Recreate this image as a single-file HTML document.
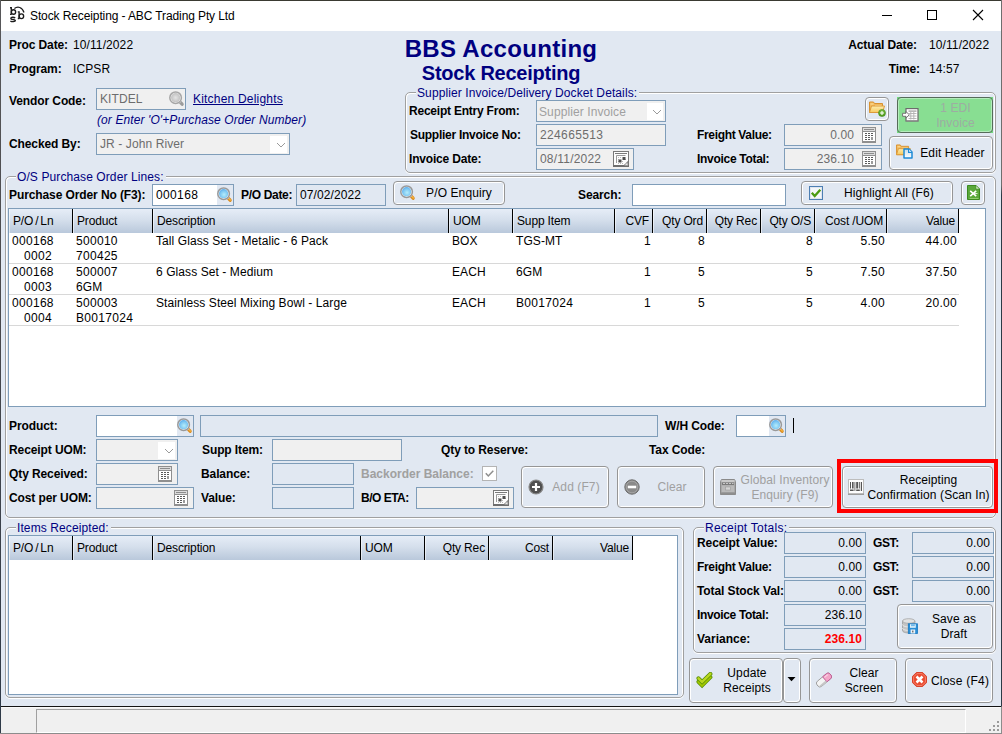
<!DOCTYPE html>
<html>
<head>
<meta charset="utf-8">
<title>Stock Receipting</title>
<style>
*{box-sizing:border-box;margin:0;padding:0}
html,body{width:1002px;height:734px;overflow:hidden;background:#e1e8f2}
body{font-family:"Liberation Sans",sans-serif;font-size:12px;color:#000;position:relative;letter-spacing:0.1px}
.a{position:absolute}
.lb{position:absolute;font-weight:bold;letter-spacing:-0.1px;height:16px;line-height:16px;white-space:nowrap}
.tx{position:absolute;height:16px;line-height:16px;white-space:nowrap}
.nv{color:#000080}
.in{position:absolute;border:1px solid #7f9db9;background:#e1e8f2;height:22px;line-height:20px;padding:0 3px;white-space:nowrap;overflow:hidden}
.in.w{background:#fff}
.in.d{background:#f0f0f0;color:#6d6d6d}
.in.r{text-align:right;padding-right:3px}
.grp{position:absolute;border:1px solid #a0a0a0;border-radius:5px;box-shadow:inset 1px 1px 0 #fff, inset -1px 0 0 #fff, 0 1px 0 #fff}
.lg{position:absolute;top:-8px;height:16px;line-height:16px;background:#e1e8f2;color:#000080;padding:0 2px 0 1px;white-space:nowrap}
.btn{position:absolute;border:1px solid #969696;border-radius:4px;background:#e1e8f2;box-shadow:inset 1px 1px 0 #fff, inset -1px -1px 0 #fff;text-align:center;white-space:nowrap}
.btn.dis{color:#a0a0a0}
.grid{position:absolute;border:1px solid #7f9db9;background:#fff;overflow:hidden}
.hd{position:absolute;top:0;height:24px;line-height:24px;letter-spacing:-0.150px;background:linear-gradient(#e6edf7,#d5dfec 45%,#b9c8db);border-right:1px solid #000;border-left:1px solid rgba(255,255,255,.55);padding:0 3px;white-space:nowrap;overflow:hidden}
.hd.r{text-align:right}
.c{position:absolute;height:15px;line-height:15px;white-space:nowrap;letter-spacing:.3px}
.c.t{letter-spacing:.08px}
.c.r{text-align:right}
.ic{position:absolute}
.rl{position:absolute;left:0;height:1px;background:#d8d8d8}
</style>
</head>
<body>
<svg width="0" height="0" style="position:absolute">
<defs>
  <radialGradient id="lens" cx="0.55" cy="0.6" r="0.7"><stop offset="0" stop-color="#b4ecfa"/><stop offset="0.6" stop-color="#7cc6f2"/><stop offset="1" stop-color="#4a9ee6"/></radialGradient>
  <radialGradient id="lensg" cx="0.5" cy="0.5" r="0.7"><stop offset="0" stop-color="#e4e4e4"/><stop offset="1" stop-color="#b4b4b4"/></radialGradient>
  <linearGradient id="fold" x1="0" y1="0" x2="0" y2="1"><stop offset="0" stop-color="#fdeeb0"/><stop offset="1" stop-color="#f7c95e"/></linearGradient>
  <linearGradient id="grn" x1="0" y1="0" x2="0" y2="1"><stop offset="0" stop-color="#7cc043"/><stop offset="1" stop-color="#4f9a1c"/></linearGradient>
  <linearGradient id="docb" x1="0" y1="0" x2="0" y2="1"><stop offset="0" stop-color="#c2dcec"/><stop offset="1" stop-color="#ffffff"/></linearGradient>
  <symbol id="mag" viewBox="0 0 16 20">
    <path d="M10.600 12.600l2.500 2.600" stroke="#d98a1c" stroke-width="3.300" stroke-linecap="round"/>
    <path d="M12 13.600l1.300 1.300" stroke="#f6b23e" stroke-width="1.400" stroke-linecap="round"/>
    <path d="M10.300 12.400l1.200 1.200" stroke="#c4c8cf" stroke-width="2.600"/>
    <circle cx="6.600" cy="8.700" r="5.800" fill="#f8f8f8" stroke="#999" stroke-width="1.500"/>
    <circle cx="6.600" cy="8.700" r="4.600" fill="url(#lens)"/>
  </symbol>
  <symbol id="magg" viewBox="0 0 16 20">
    <path d="M10.600 12.600l2.500 2.600" stroke="#9c9c9c" stroke-width="3.300" stroke-linecap="round"/>
    <path d="M10.300 12.400l1.200 1.200" stroke="#c8c8c8" stroke-width="2.600"/>
    <circle cx="6.600" cy="8.700" r="5.800" fill="#f6f6f6" stroke="#a6a6a6" stroke-width="1.500"/>
    <circle cx="6.600" cy="8.700" r="4.600" fill="url(#lensg)"/>
  </symbol>
  <symbol id="cal" viewBox="0 0 16 16">
    <rect x="0.500" y="0.500" width="15" height="15" fill="#fdfdfd" stroke="#787878"/>
    <rect x="0" y="14" width="16" height="2" fill="#6e6e6e"/>
    <path d="M2 2.500h12" stroke="#7a7a7a"/>
    <path d="M3.500 12v-7.500h9" stroke="#9a9a9a" fill="none"/>
    <g fill="#b8b8b8"><rect x="5" y="6" width="1" height="1"/><rect x="7" y="6" width="1" height="1"/><rect x="5" y="8" width="1" height="1"/><rect x="12" y="8" width="1" height="1"/><rect x="5" y="10" width="1" height="1"/><rect x="9" y="10" width="1" height="1"/><rect x="5" y="12" width="1" height="1"/><rect x="7" y="12" width="1" height="1"/><rect x="9" y="12" width="1" height="1"/></g>
    <rect x="9.500" y="6" width="3" height="3" fill="#4e4e4e"/>
    <rect x="5.500" y="8.500" width="3" height="3" fill="#4e4e4e"/>
    <path d="M15 10.500l-4.500 4.500h4.500z" fill="#9a9a9a"/>
    <path d="M15.500 10l-5 5" stroke="#6e6e6e" fill="none"/>
    <rect x="12.500" y="12.500" width="2" height="1.500" fill="#e8e8e8"/>
  </symbol>
  <symbol id="calc" viewBox="0 0 14 16">
    <rect width="14" height="16" fill="#8f8f8f"/>
    <rect x="1" y="1" width="12" height="3" fill="#dcdcdc"/>
    <rect x="2" y="2" width="10" height="1" fill="#8c8c8c"/>
    <rect x="1" y="5" width="12" height="9" fill="#fff"/>
    <g fill="#5a5a5a"><rect x="3" y="6" width="2" height="1"/><rect x="6" y="6" width="2" height="1"/><rect x="9" y="6" width="2" height="1"/>
    <rect x="3" y="8" width="2" height="1"/><rect x="6" y="8" width="2" height="1"/><rect x="9" y="8" width="2" height="1"/>
    <rect x="3" y="10" width="2" height="1"/><rect x="6" y="10" width="2" height="1"/>
    <rect x="3" y="12" width="2" height="1"/><rect x="6" y="12" width="2" height="1"/></g>
    <rect x="9" y="10" width="2" height="3" fill="#9a9a9a"/>
  </symbol>
  <symbol id="chev" viewBox="0 0 10 6"><path d="M1 1l4 4 4-4" fill="none" stroke="#9a9a9a" stroke-width="1"/></symbol>
  <symbol id="folder" viewBox="0 0 16 14">
    <path d="M0.500 11.500v-10.500h4l1 1.500h8v9z" fill="#f3b95c" stroke="#d8912f"/>
    <path d="M1.500 3h3M6 4.500h6.500" stroke="#fbe2a0" fill="none"/>
    <path d="M0.500 11.500l2-6.500h13l-2 6.500z" fill="url(#fold)" stroke="#dc9a3a"/>
  </symbol>
  <symbol id="plusc" viewBox="0 0 8 8">
    <circle cx="4" cy="4" r="3.500" fill="url(#grn)" stroke="#3f8a14" stroke-width="0.600"/>
    <path d="M4 2v4M2 4h4" stroke="#fff" stroke-width="1.100"/>
  </symbol>
  <symbol id="edi" viewBox="0 0 17 14">
    <rect x="4" y="0.600" width="12" height="12.400" fill="#fff" stroke="#6c6c6c" stroke-width="1.200"/>
    <rect x="4" y="12.500" width="12.600" height="1" fill="#8a8a8a"/>
    <rect x="6.500" y="2.500" width="8" height="1.200" fill="#9a9a9a"/>
    <path d="M6.500 5.500h8M6.500 8h8M6.500 10.500h8M8.800 4v7.500M11.800 4v7.500" stroke="#b0b0b0" stroke-width="0.900" fill="none"/>
    <path d="M0.600 5.300h3.400v-1.800l3.200 3.300-3.200 3.300v-1.800h-3.400z" fill="#fff" stroke="#6c6c6c" stroke-width="0.900"/>
  </symbol>
  <symbol id="doc" viewBox="0 0 10 11">
    <path d="M1 1h5l3 3v6h-8z" fill="url(#docb)" stroke="#1e8ad6" stroke-width="1.500" stroke-linejoin="round"/>
    <path d="M5.600 1v3.400h3.400" fill="#fff" stroke="#1e8ad6" stroke-width="1.200"/>
  </symbol>
  <symbol id="chk" viewBox="0 0 14 14">
    <rect x="0.500" y="0.500" width="13" height="13" fill="#f4f7fa" stroke="#4d7fb3"/>
    <rect x="1.500" y="1.500" width="11" height="11" fill="none" stroke="#dfe6ee"/>
    <path d="M2.800 6.800l2.900 3.200 5.600-6.200" fill="none" stroke="#4a9b12" stroke-width="2.300"/>
  </symbol>
  <symbol id="xls" viewBox="0 0 13 15">
    <path d="M0.500 0.500h8.500l3.500 3.500v10.500h-12z" fill="#5aa83a" stroke="#3d8a20"/>
    <path d="M9 0.500v3.500h3.500z" fill="#e8f4e0" stroke="#3d8a20" stroke-width="0.600"/>
    <path d="M2.500 13.500h9" stroke="#8fce6c" fill="none"/>
    <path d="M3.200 5.800l6 5.400M9.200 5.800l-6 5.400" stroke="#fff" stroke-width="1.600" fill="none"/>
    <path d="M5 8.500h5.500" stroke="#fff" stroke-width="0.800"/>
  </symbol>
  <symbol id="addc" viewBox="0 0 16 16">
    <circle cx="8" cy="8" r="7" fill="#505050" stroke="#8a8a8a" stroke-width="1.200"/>
    <path d="M8 4v8M4 8h8" stroke="#fff" stroke-width="2.200"/>
  </symbol>
  <symbol id="minc" viewBox="0 0 16 16">
    <circle cx="8" cy="8" r="7.200" fill="#8a8a8a" stroke="#6e6e6e" stroke-width="1"/>
    <circle cx="8" cy="8" r="5.800" fill="none" stroke="#a4a4a4" stroke-width="1"/>
    <path d="M3.800 8h8.400" stroke="#fff" stroke-width="2.600"/>
  </symbol>
  <symbol id="glob" viewBox="0 0 16 16">
    <path d="M1.500 0.500h13l1 2v13h-15v-13z" fill="#a9a9a9" stroke="#8a8a8a"/>
    <rect x="1.500" y="1" width="13" height="2" fill="#c9c9c9"/>
    <rect x="2" y="3.500" width="12" height="2.500" fill="#7a7a7a"/>
    <path d="M3 4.500h2M6 4.500h2M9 4.500h2M12 4.500h1.500" stroke="#c8c8c8"/>
    <rect x="2" y="6.500" width="12" height="6.500" fill="#b9b9b9"/>
    <rect x="5.500" y="8" width="5" height="3" fill="#d4d4d4" stroke="#9a9a9a" stroke-width="0.600"/>
    <rect x="0.500" y="13.500" width="15" height="2" fill="#8e8e8e"/>
  </symbol>
  <symbol id="barc" viewBox="0 0 16 16">
    <rect x="0.500" y="0.500" width="15" height="14.500" fill="#fdfdfd" stroke="#bdbdbd"/>
    <rect x="0" y="14.500" width="16" height="1.500" fill="#9c9c9c"/>
    <g fill="#555"><rect x="2" y="3" width="1" height="6.500"/><rect x="4" y="3" width="1.600" height="6.500"/><rect x="6.500" y="3" width="0.800" height="9"/><rect x="8.200" y="3" width="2" height="6.500"/><rect x="11" y="3" width="0.800" height="6.500"/><rect x="12.800" y="3" width="1.200" height="9"/>
    <rect x="2" y="10.500" width="3.600" height="1.500"/><rect x="8.200" y="10.500" width="3.600" height="1.500"/></g>
  </symbol>
  <symbol id="db" viewBox="0 0 16 16">
    <path d="M0.500 3v9.500c0 1.500 2.800 2.500 6.200 2.500s6.200-1 6.200-2.500v-9.500z" fill="#c4c4c4" stroke="#9a9a9a" stroke-width="0.800"/>
    <path d="M0.500 6.500c0 1.500 2.800 2.400 6.200 2.400s6.200-0.900 6.200-2.400M0.500 10c0 1.500 2.800 2.400 6.200 2.400s6.200-0.900 6.200-2.400" fill="none" stroke="#ececec" stroke-width="1"/>
    <ellipse cx="6.700" cy="3" rx="6.200" ry="2.300" fill="#e2e2e2" stroke="#a4a4a4" stroke-width="0.800"/>
    <rect x="6.300" y="5.800" width="9.200" height="9.700" fill="#2a8ed6" stroke="#1878c0" stroke-width="0.800"/>
    <rect x="8" y="6.200" width="5.800" height="3.600" fill="#dff0fb"/>
    <rect x="9" y="6.200" width="3.800" height="2" fill="#6fb8ea"/>
    <rect x="8.600" y="11.500" width="4.600" height="4" fill="#e8f2fa"/>
    <rect x="10.200" y="12.600" width="1.200" height="1.800" fill="#555"/>
  </symbol>
  <symbol id="ok2" viewBox="0 0 17 17">
    <g fill="none" stroke-linejoin="miter" stroke-linecap="round">
      <path d="M2.500 9.800l3.600 3.700 8.300-8.300" stroke="#558c05" stroke-width="4"/>
      <path d="M2.500 9.800l3.600 3.700 8.300-8.300" stroke="#a4ca00" stroke-width="2.500"/>
      <path d="M2.500 6.300l3.600 3.700 8.300-8.100" stroke="#558c05" stroke-width="4"/>
      <path d="M2.500 6.300l3.600 3.700 8.300-8.100" stroke="#b9d720" stroke-width="2.500"/>
    </g>
  </symbol>
  <symbol id="eras" viewBox="0 0 16 16">
    <g transform="rotate(-40 8 8)">
      <rect x="-0.500" y="4.700" width="17" height="6.600" rx="2.600" fill="#f4f4f4" stroke="#9c9c9c" stroke-width="0.900"/>
      <path d="M9 4.700h5c1.400 0 2.500 1.200 2.500 2.600v1.400c0 1.400-1.100 2.600-2.500 2.600h-5z" fill="#f3a6c8" stroke="#c05a96" stroke-width="0.900"/>
      <path d="M0.500 9.500h8.500v1.800h-6c-1.300 0-2.200-0.800-2.500-1.800z" fill="#c6c6c6"/>
      <path d="M10 6.300h4.500" stroke="#fbd6e8" stroke-width="1"/>
    </g>
  </symbol>
  <symbol id="clx" viewBox="0 0 16 16">
    <path d="M4.700 0.500h6.600l4.200 4.200v6.600l-4.200 4.200h-6.600l-4.200-4.200v-6.600z" fill="#ea4a30" stroke="#d63a22" stroke-width="1"/>
    <path d="M5.200 1.700h5.600l3.500 3.500v5.600l-3.500 3.500h-5.600l-3.500-3.500v-5.600z" fill="none" stroke="#f58c74" stroke-width="0.900"/>
    <path d="M4.800 4.800l6.400 6.400M11.200 4.800l-6.400 6.400" stroke="#fff" stroke-width="2.700"/>
  </symbol>
</defs>
</svg>
<!-- window frame -->
<div class="a" style="left:0;top:0;width:1002px;height:31px;background:#fff"></div>
<div class="a" style="left:0;top:0;width:1002px;height:1px;background:#3a3a32"></div>
<div class="a" style="left:0;top:0;width:1px;height:734px;background:linear-gradient(#58585a 0,#4a4a4e 40%,#2e3a48 100%)"></div>
<div class="a" style="left:1001px;top:0;width:1px;height:734px;background:linear-gradient(#6e6e6e 0,#6e6e6e 185px,#2c3a46 195px,#2c3a46 706px,#8c8c8c 707px,#8c8c8c 100%)"></div>

<!-- title bar -->
<svg class="a" style="left:8px;top:4px" width="20" height="20" viewBox="8 4 20 20">
  <g fill="none" stroke="#1c1c1c" stroke-width="1.350" stroke-linecap="butt">
    <path d="M10 7.700h1.300v6.800M10 14.300h1.600"/>
    <ellipse cx="13.500" cy="12" rx="2.150" ry="2.300"/>
    <path d="M17.800 11.900h1.300v6.800M17.800 18.500h1.600"/>
    <ellipse cx="21.400" cy="16.200" rx="2.250" ry="2.350"/>
    <path d="M15.200 17.900c-1-.9-4.400-1-4.400.5 0 1.600 4.600.5 4.600 2.200 0 1.500-3.800 1.300-5 .3"/>
  </g>
  <path d="M14.400 8.600c3.200-2.700 8-1.600 9.600 3.900" fill="none" stroke="#1c1c1c" stroke-width="1.250"/>
</svg>
<div class="a" style="left:30px;top:8px;height:16px;line-height:16px;font-size:12px;letter-spacing:-0.11px;white-space:nowrap">Stock Receipting - ABC Trading Pty Ltd</div>
<svg class="a" style="left:870px;top:1px" width="130" height="30" viewBox="0 0 130 30">
  <path d="M12 14.500h10" stroke="#000" stroke-width="1" fill="none"/>
  <rect x="57.500" y="9.500" width="9" height="9" stroke="#000" stroke-width="1" fill="none"/>
  <path d="M103 9l10 10M113 9l-10 10" stroke="#000" stroke-width="1.100" fill="none"/>
</svg>

<!-- header -->
<div class="lb" style="left:9px;top:37px">Proc Date:</div>
<div class="tx" style="left:73px;top:37px">10/11/2022</div>
<div class="lb" style="left:9px;top:61px">Program:</div>
<div class="tx" style="left:73px;top:61px">ICPSR</div>
<div class="lb" style="left:9px;top:93px">Vendor Code:</div>
<div class="in d" style="left:96px;top:88px;width:90px">KITDEL</div>
<div class="tx nv" style="left:193px;top:91px;letter-spacing:.2px;text-decoration:underline">Kitchen Delights</div>
<div class="tx nv" style="left:97px;top:112px;font-style:italic">(or Enter 'O'+Purchase Order Number)</div>
<div class="lb" style="left:9px;top:136px">Checked By:</div>
<div class="in d" style="left:96px;top:133px;width:194px">JR - John River</div>

<div class="a nv" style="left:301px;top:34px;width:400px;text-align:center;font-weight:bold;font-size:24px;letter-spacing:0.3px;line-height:30px;white-space:nowrap">BBS Accounting</div>
<div class="a nv" style="left:301px;top:61px;width:400px;text-align:center;font-weight:bold;font-size:20px;letter-spacing:-0.25px;line-height:24px;white-space:nowrap">Stock Receipting</div>

<div class="lb" style="right:85px;top:37px">Actual Date:</div>
<div class="tx" style="left:929px;top:37px">10/11/2022</div>
<div class="lb" style="right:82px;top:61px">Time:</div>
<div class="tx" style="left:929px;top:61px">14:57</div>

<!-- supplier invoice group -->
<div class="grp" style="left:405px;top:92px;width:591px;height:81px"><div class="lg" style="left:10px">Supplier Invoice/Delivery Docket Details:</div></div>
<div class="lb" style="letter-spacing:-0.22px;left:409px;top:103px">Receipt Entry From:</div>
<div class="in d" style="left:536px;top:100px;width:130px;color:#a0a0a0;padding-left:2px;line-height:22px">Supplier Invoice</div>
<div class="lb" style="letter-spacing:-0.27px;left:410px;top:127px">Supplier Invoice No:</div>
<div class="in d" style="left:536px;top:124px;width:130px;letter-spacing:.36px">224665513</div>
<div class="lb" style="letter-spacing:-0.18px;left:409px;top:151px">Invoice Date:</div>
<div class="in d" style="left:536px;top:148px;width:98px;letter-spacing:.2px">08/11/2022</div>
<div class="lb" style="letter-spacing:-0.33px;left:697px;top:127px">Freight Value:</div>
<div class="in d r" style="left:784px;top:124px;width:98px;padding-right:27px">0.00</div>
<div class="lb" style="letter-spacing:-0.3px;left:697px;top:151px">Invoice Total:</div>
<div class="in d r" style="left:784px;top:148px;width:98px;padding-right:27px">236.10</div>
<div class="btn" style="left:865px;top:97px;width:24px;height:24px"></div>
<div class="a" style="left:897px;top:97px;width:96px;height:36px;background:#74dc80"></div><div class="btn dis" style="left:897px;top:97px;width:96px;height:36px;background:#88de92;border-color:#566b5a;box-shadow:inset 1px 1px 0 #b4ecbc, inset -1px -1px 0 #b4ecbc;line-height:15px;padding:3px 0 0 21px;color:#9dada2">1 EDI<br>Invoice</div>
<div class="btn" style="left:889px;top:136px;width:104px;height:34px;line-height:32px;padding-left:23px">Edit Header</div>

<!-- O/S purchase order lines group -->
<div class="grp" style="left:5px;top:176px;width:991px;height:342px"><div class="lg" style="left:10px">O/S Purchase Order Lines:</div></div>
<div class="lb" style="left:9px;top:187px">Purchase Order No (F3):</div>
<div class="in w" style="left:152px;top:184px;width:82px;letter-spacing:.36px">000168</div>
<div class="lb" style="left:241px;top:187px;letter-spacing:-.32px">P/O Date:</div>
<div class="in" style="left:296px;top:184px;width:90px;padding-left:3px">07/02/2022</div>
<div class="btn" style="left:393px;top:181px;width:112px;height:24px;line-height:22px;padding-left:20px">P/O Enquiry</div>
<div class="lb" style="left:578px;top:187px">Search:</div>
<div class="in w" style="left:632px;top:184px;width:154px"></div>
<div class="btn" style="left:801px;top:181px;width:152px;height:24px;line-height:22px;padding-left:24px">Highlight All (F6)</div>
<div class="btn" style="left:961px;top:181px;width:24px;height:24px"></div>

<div class="grid" style="left:8px;top:208px;width:978px;height:199px">
  <div class="hd" style="left:0;width:64px;word-spacing:-1.200px">P/O / Ln</div>
  <div class="hd" style="left:64px;width:80px">Product</div>
  <div class="hd" style="left:144px;width:296px">Description</div>
  <div class="hd" style="left:440px;width:64px">UOM</div>
  <div class="hd" style="left:504px;width:102px">Supp Item</div>
  <div class="hd r" style="left:606px;width:38px">CVF</div>
  <div class="hd r" style="left:644px;width:54px">Qty Ord</div>
  <div class="hd r" style="left:698px;width:54px">Qty Rec</div>
  <div class="hd r" style="left:752px;width:54px">Qty O/S</div>
  <div class="hd r" style="left:806px;width:72px">Cost /UOM</div>
  <div class="hd r" style="left:878px;width:72px">Value</div>
  <!-- rows -->
  <div class="c" style="left:3px;top:25px">000168</div><div class="c r" style="left:3px;top:40px;width:40px">0002</div>
  <div class="c" style="left:67px;top:25px">500010</div><div class="c" style="left:67px;top:40px">700425</div>
  <div class="c t" style="left:147px;top:25px">Tall Glass Set - Metalic - 6 Pack</div>
  <div class="c t" style="left:443px;top:25px">BOX</div><div class="c t" style="left:507px;top:25px">TGS-MT</div>
  <div class="c r" style="left:606px;top:25px;width:36px">1</div><div class="c r" style="left:644px;top:25px;width:52px">8</div>
  <div class="c r" style="left:752px;top:25px;width:52px">8</div><div class="c r" style="left:806px;top:25px;width:70px">5.50</div><div class="c r" style="left:878px;top:25px;width:70px">44.00</div>
  <div class="rl" style="top:54px;width:950px"></div>

  <div class="c" style="left:3px;top:56px">000168</div><div class="c r" style="left:3px;top:71px;width:40px">0003</div>
  <div class="c" style="left:67px;top:56px">500007</div><div class="c t" style="left:67px;top:71px">6GM</div>
  <div class="c t" style="left:147px;top:56px">6 Glass Set - Medium</div>
  <div class="c t" style="left:443px;top:56px">EACH</div><div class="c t" style="left:507px;top:56px">6GM</div>
  <div class="c r" style="left:606px;top:56px;width:36px">1</div><div class="c r" style="left:644px;top:56px;width:52px">5</div>
  <div class="c r" style="left:752px;top:56px;width:52px">5</div><div class="c r" style="left:806px;top:56px;width:70px">7.50</div><div class="c r" style="left:878px;top:56px;width:70px">37.50</div>
  <div class="rl" style="top:85px;width:950px"></div>

  <div class="c" style="left:3px;top:87px">000168</div><div class="c r" style="left:3px;top:102px;width:40px">0004</div>
  <div class="c" style="left:67px;top:87px">500003</div><div class="c" style="left:67px;top:102px">B0017024</div>
  <div class="c t" style="left:147px;top:87px">Stainless Steel Mixing Bowl - Large</div>
  <div class="c t" style="left:443px;top:87px">EACH</div><div class="c" style="left:507px;top:87px">B0017024</div>
  <div class="c r" style="left:606px;top:87px;width:36px">1</div><div class="c r" style="left:644px;top:87px;width:52px">5</div>
  <div class="c r" style="left:752px;top:87px;width:52px">5</div><div class="c r" style="left:806px;top:87px;width:70px">4.00</div><div class="c r" style="left:878px;top:87px;width:70px">20.00</div>
  <div class="rl" style="top:116px;width:950px"></div>
</div>

<!-- entry section -->
<div class="lb" style="left:9px;top:418px">Product:</div>
<div class="in w" style="left:96px;top:415px;width:98px"></div>
<div class="in" style="left:200px;top:415px;width:458px"></div>
<div class="lb" style="left:665px;top:418px">W/H Code:</div>
<div class="in w" style="left:736px;top:415px;width:50px"></div>
<div class="a" style="left:793px;top:418px;width:1px;height:15px;background:#000"></div>

<div class="lb" style="left:9px;top:442px">Receipt UOM:</div>
<div class="in d" style="left:96px;top:439px;width:82px"></div>
<div class="lb" style="left:202px;top:442px">Supp Item:</div>
<div class="in d" style="left:272px;top:439px;width:130px"></div>
<div class="lb" style="left:441px;top:442px">Qty to Reserve:</div>
<div class="lb" style="left:649px;top:442px">Tax Code:</div>

<div class="lb" style="left:9px;top:466px">Qty Received:</div>
<div class="in d" style="left:96px;top:463px;width:82px"></div>
<div class="lb" style="left:201px;top:466px">Balance:</div>
<div class="in" style="left:272px;top:463px;width:82px"></div>
<div class="lb" style="left:361px;top:466px;color:#a0a0a0;letter-spacing:0">Backorder Balance:</div>
<div class="a" style="left:482px;top:466px;width:15px;height:15px;border:1px solid #b4b4b4;background:#fff"></div><svg class="ic" style="left:482px;top:466px" width="15" height="15"><path d="M3.800 7.300l2.500 2.600 5-5.200" fill="none" stroke="#8e8e8e" stroke-width="1.500"/></svg>

<div class="lb" style="left:9px;top:490px">Cost per UOM:</div>
<div class="in d" style="left:96px;top:487px;width:98px"></div>
<div class="lb" style="left:201px;top:490px">Value:</div>
<div class="in" style="left:272px;top:487px;width:82px"></div>
<div class="lb" style="left:361px;top:490px;letter-spacing:-0.500px">B/O ETA:</div>
<div class="in d" style="left:416px;top:487px;width:98px"></div>

<div class="btn dis" style="left:521px;top:466px;width:88px;height:42px;line-height:40px;padding-left:22px">Add (F7)</div>
<div class="btn dis" style="left:617px;top:466px;width:88px;height:42px;line-height:40px;padding-left:22px">Clear</div>
<div class="btn dis" style="left:713px;top:466px;width:120px;height:42px;line-height:15px;padding:6px 0 0 24px">Global Inventory<br>Enquiry (F9)</div>
<div class="btn" style="left:842px;top:466px;width:151px;height:42px;line-height:15px;padding:6px 0 0 22px">Receipting<br>Confirmation (Scan In)</div>
<div class="a" style="left:837px;top:459px;width:161px;height:54px;border:4px solid #f00"></div>

<!-- items receipted group -->
<div class="grp" style="left:5px;top:527px;width:679px;height:171px"><div class="lg" style="left:10px">Items Receipted:</div></div>
<div class="grid" style="left:8px;top:535px;width:670px;height:160px">
  <div class="hd" style="left:0;width:64px;word-spacing:-1.200px">P/O / Ln</div>
  <div class="hd" style="left:64px;width:80px">Product</div>
  <div class="hd" style="left:144px;width:208px">Description</div>
  <div class="hd" style="left:352px;width:64px">UOM</div>
  <div class="hd r" style="left:416px;width:64px">Qty Rec</div>
  <div class="hd r" style="left:480px;width:64px">Cost</div>
  <div class="hd r" style="left:544px;width:80px">Value</div>
</div>

<!-- receipt totals group -->
<div class="grp" style="left:693px;top:527px;width:303px;height:126px"><div class="lg" style="left:10px;letter-spacing:.25px">Receipt Totals:</div></div>
<div class="lb" style="left:697px;top:535px">Receipt Value:</div>
<div class="in r" style="left:784px;top:532px;width:82px">0.00</div>
<div class="lb" style="left:873px;top:535px;letter-spacing:-.4px">GST:</div>
<div class="in r" style="left:912px;top:532px;width:82px">0.00</div>
<div class="lb" style="left:697px;top:559px;letter-spacing:-.33px">Freight Value:</div>
<div class="in r" style="left:784px;top:556px;width:82px">0.00</div>
<div class="lb" style="left:873px;top:559px;letter-spacing:-.4px">GST:</div>
<div class="in r" style="left:912px;top:556px;width:82px">0.00</div>
<div class="lb" style="left:697px;top:583px">Total Stock Val:</div>
<div class="in r" style="left:784px;top:580px;width:82px">0.00</div>
<div class="lb" style="left:873px;top:583px;letter-spacing:-.4px">GST:</div>
<div class="in r" style="left:912px;top:580px;width:82px">0.00</div>
<div class="lb" style="left:697px;top:607px;letter-spacing:-.35px">Invoice Total:</div>
<div class="in r" style="left:784px;top:604px;width:82px">236.10</div>
<div class="lb" style="left:697px;top:631px;letter-spacing:0">Variance:</div>
<div class="in r" style="left:784px;top:628px;width:82px;color:#f00;font-weight:bold">236.10</div>
<div class="btn" style="left:897px;top:604px;width:96px;height:45px;line-height:15px;padding:7px 0 0 18px">Save as<br>Draft</div>

<!-- bottom buttons -->
<div class="btn" style="left:689px;top:658px;width:94px;height:45px;line-height:15px;padding:7px 0 0 22px">Update<br>Receipts</div>
<div class="btn" style="left:783px;top:658px;width:18px;height:45px"></div>
<div class="btn" style="left:809px;top:658px;width:88px;height:45px;line-height:15px;padding:7px 0 0 22px">Clear<br>Screen</div>
<div class="btn" style="left:905px;top:658px;width:88px;height:45px;line-height:44px;padding-left:22px;letter-spacing:.22px">Close (F4)</div>

<!-- status bar -->
<div class="a" style="left:1px;top:707px;width:1000px;height:26px;background:#f0f0f0"></div>
<div class="a" style="left:1px;top:706px;width:1000px;height:1px;background:#141414"></div>
<div class="a" style="left:1px;top:707px;width:1000px;height:1px;background:#fafafa"></div>
<div class="a" style="left:36px;top:709px;width:930px;height:24px;border-left:1px solid #a0a0a0;border-top:1px solid #a0a0a0;border-right:1px solid #fff;border-bottom:1px solid #fff"></div>
<svg class="a" style="left:988px;top:720px" width="12" height="12"><g fill="#9a9a9a"><rect x="9" y="1" width="2" height="2"/><rect x="5" y="5" width="2" height="2"/><rect x="9" y="5" width="2" height="2"/><rect x="1" y="9" width="2" height="2"/><rect x="5" y="9" width="2" height="2"/><rect x="9" y="9" width="2" height="2"/></g></svg>
<div class="a" style="left:0;top:733px;width:1002px;height:1px;background:#8c8c8c"></div>

<!-- field icons -->
<svg class="ic" style="left:169px;top:89px" width="16" height="20"><use href="#magg"/></svg>
<div class="a" style="left:217px;top:185px;width:16px;height:20px;background:#e1e8f2"></div><svg class="ic" style="left:217px;top:185px" width="16" height="20"><use href="#mag"/></svg>
<div class="a" style="left:177px;top:416px;width:16px;height:20px;background:#e1e8f2"></div><svg class="ic" style="left:177px;top:416px" width="16" height="20"><use href="#mag"/></svg>
<div class="a" style="left:769px;top:416px;width:16px;height:20px;background:#e1e8f2"></div><svg class="ic" style="left:769px;top:416px" width="16" height="20"><use href="#mag"/></svg>
<svg class="ic" style="left:400.4px;top:183.3px" width="16" height="20"><use href="#mag"/></svg>
<div class="a" style="left:270px;top:136px;width:17px;height:17px;background:#fff"></div><svg class="ic" style="left:276px;top:142px" width="10" height="6"><use href="#chev"/></svg>
<div class="a" style="left:647px;top:103px;width:16px;height:17px;background:#fff"></div><svg class="ic" style="left:652px;top:109px" width="10" height="6"><use href="#chev"/></svg>
<div class="a" style="left:158px;top:442px;width:17px;height:17px;background:#fff"></div><svg class="ic" style="left:164px;top:448px" width="10" height="6"><use href="#chev"/></svg>
<svg class="ic" style="left:613px;top:151px" width="16" height="16"><use href="#cal"/></svg>
<svg class="ic" style="left:493px;top:490px" width="16" height="16"><use href="#cal"/></svg>
<svg class="ic" style="left:862px;top:127px" width="14" height="16"><use href="#calc"/></svg>
<svg class="ic" style="left:862px;top:151px" width="14" height="16"><use href="#calc"/></svg>
<svg class="ic" style="left:158px;top:466px" width="14" height="16"><use href="#calc"/></svg>
<svg class="ic" style="left:174px;top:490px" width="14" height="16"><use href="#calc"/></svg>

<!-- button icons -->
<svg class="ic" style="left:869px;top:101px" width="16" height="14"><use href="#folder"/></svg><svg class="ic" style="left:877.5px;top:108.6px" width="8" height="8"><use href="#plusc"/></svg>
<svg class="ic" style="left:901.5px;top:107.8px" width="17" height="14"><use href="#edi"/></svg>
<svg class="ic" style="left:896px;top:144px" width="15" height="13"><use href="#folder"/></svg><svg class="ic" style="left:902.500px;top:148px" width="10" height="11"><use href="#doc"/></svg>
<svg class="ic" style="left:809px;top:186px" width="14" height="14"><use href="#chk"/></svg>
<svg class="ic" style="left:967px;top:185px" width="13" height="15"><use href="#xls"/></svg>
<svg class="ic" style="left:528px;top:479px" width="16" height="16"><use href="#addc"/></svg>
<svg class="ic" style="left:623.500px;top:479px" width="16" height="16"><use href="#minc"/></svg>
<svg class="ic" style="left:720px;top:479px" width="16" height="16"><use href="#glob"/></svg>
<svg class="ic" style="left:848px;top:479px" width="16" height="16"><use href="#barc"/></svg>
<svg class="ic" style="left:901.500px;top:618px" width="16" height="16"><use href="#db"/></svg>
<svg class="ic" style="left:695.500px;top:671.500px" width="17" height="17"><use href="#ok2"/></svg>
<svg class="ic" style="left:787px;top:677px" width="9" height="5"><path d="M0.500 0h8l-4 4.300z" fill="#000"/></svg>
<svg class="ic" style="left:816px;top:672px" width="16" height="16"><use href="#eras"/></svg>
<svg class="ic" style="left:912px;top:672px" width="15" height="15"><use href="#clx"/></svg>

<!--SECTION5-->

</body>
</html>
